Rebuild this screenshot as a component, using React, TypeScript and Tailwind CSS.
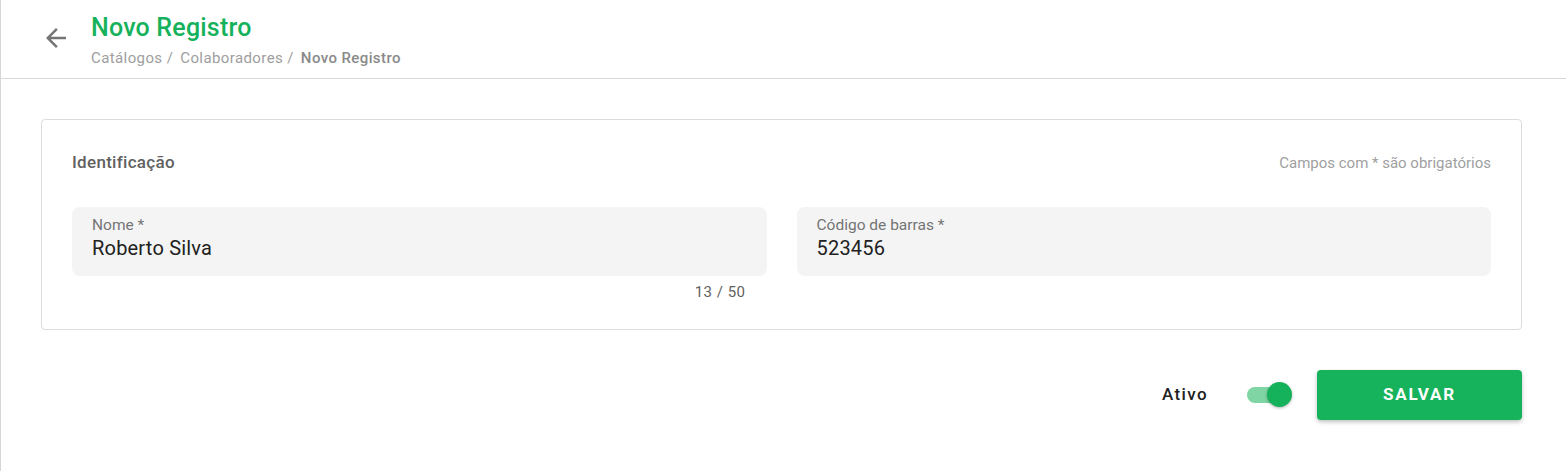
import React from "react";

export default function App() {
  const [ativo, setAtivo] = React.useState(true);
  const [nome, setNome] = React.useState("Roberto Silva");
  const [codigo, setCodigo] = React.useState("523456");

  return (
    <div className="h-[471px] w-full border-l border-[#d6d6d6] bg-white font-['Roboto',sans-serif] flex flex-col">
      <header className="h-[79px] border-b border-[#d9d9d9] flex items-start pl-[40px] pt-[14px]">
        <button className="mt-[9px] w-[30px] h-[30px] flex items-center justify-center text-[#757575]">
          <svg width="30" height="30" viewBox="0 0 24 24" fill="currentColor">
            <path d="M20 11H7.83l5.59-5.59L12 4l-8 8 8 8 1.41-1.41L7.83 13H20v-2z" />
          </svg>
        </button>
        <div className="ml-[20px]">
          <h1 className="text-[25px] leading-[28px] font-medium tracking-[0.2px] text-[#16b25b]">Novo Registro</h1>
          <nav className="mt-[7px] text-[15px] leading-[18px] tracking-[0.4px] text-[#9e9e9e]">
            <span>Catálogos /</span>
            <span className="ml-[7px]">Colaboradores /</span>
            <span className="ml-[7px] font-medium text-[#8a8a8a]">Novo Registro</span>
          </nav>
        </div>
      </header>

      <main className="flex-1 pl-[40px] pr-[44px] pt-[40px] bg-white">
        <section className="border border-[#dcdcdc] rounded-[4px] px-[30px] pt-[31px] pb-[28px]">
          <div className="flex items-center justify-between h-[24px]">
            <h2 className="text-[17px] font-medium tracking-[0.3px] text-[#616161]">Identificação</h2>
            <span className="text-[15px] text-[#a0a0a0]">Campos com * são obrigatórios</span>
          </div>
          <div className="mt-[32px] grid grid-cols-2 gap-[30px]">
            <div>
              <label className="block h-[69px] rounded-[8px] bg-[#f4f4f4] px-[20px] pt-[9px]">
                <span className="block text-[15.5px] leading-[19px] text-[#757575]">Nome *</span>
                <input
                  value={nome}
                  onChange={(e) => setNome(e.target.value)}
                  maxLength={50}
                  className="block w-full bg-transparent outline-none text-[20px] leading-[27px] tracking-[0.2px] text-[#212121]"
                />
              </label>
              <div className="text-right pr-[21px] mt-[7px] text-[15px] leading-[18px] tracking-[0.5px] text-[#616161]">
                {nome.length} / 50
              </div>
            </div>
            <div>
              <label className="block h-[69px] rounded-[8px] bg-[#f4f4f4] px-[20px] pt-[9px]">
                <span className="block text-[15.5px] leading-[19px] text-[#757575]">Código de barras *</span>
                <input
                  value={codigo}
                  onChange={(e) => setCodigo(e.target.value)}
                  className="block w-full bg-transparent outline-none text-[20px] leading-[27px] tracking-[0.2px] text-[#212121]"
                />
              </label>
            </div>
          </div>
        </section>

        <div className="mt-[40px] flex items-center justify-end">
          <span className="text-[17px] font-medium tracking-[1.4px] text-[#212121]">Ativo</span>
          <button
            onClick={() => setAtivo(!ativo)}
            className="ml-[39px] relative w-[46px] h-[26px] flex items-center"
          >
            <span className={`block w-[36px] h-[16px] rounded-full ${ativo ? "bg-[#80d5a4]" : "bg-[#bdbdbd]"}`} />
            <span
              className={`absolute top-0 w-[25px] h-[25px] rounded-full shadow-[0_1px_3px_rgba(0,0,0,0.3)] ${ativo ? "left-[20px] bg-[#16b25b]" : "left-0 bg-[#fafafa]"}`}
            />
          </button>
          <button className="ml-[24px] w-[205px] h-[50px] rounded-[4px] bg-[#16b35c] text-white text-[17px] font-bold tracking-[1.8px] shadow-[0_2px_4px_rgba(0,0,0,0.25)]">
            SALVAR
          </button>
        </div>
      </main>
    </div>
  );
}
